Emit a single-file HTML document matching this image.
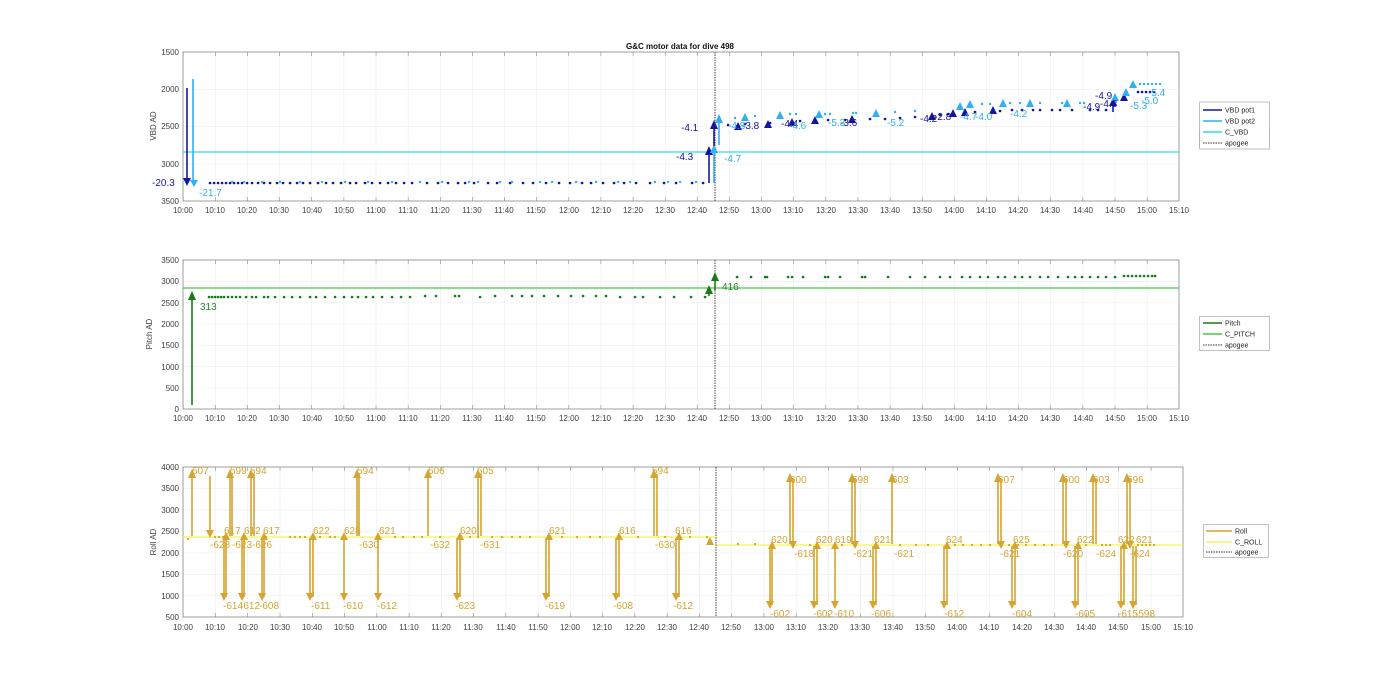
<!DOCTYPE html>
<html><head><meta charset="utf-8"><style>
html,body{margin:0;padding:0;background:#fff}
svg{display:block;font-family:"Liberation Sans",sans-serif}
.t{font-size:8px;fill:#404040}
.lg{font-size:7px;fill:#262626}
</style></head><body>
<svg width="1400" height="693" viewBox="0 0 1400 693" xmlns="http://www.w3.org/2000/svg">
<defs>
<pattern id="g1" x="183" y="52" width="32.13" height="37.25" patternUnits="userSpaceOnUse"><path d="M0 0V37.25M0 0H32.13" stroke="#e4e4e4" stroke-width="0.8" fill="none"/></pattern>
<pattern id="g2" x="183" y="260" width="32.13" height="21.29" patternUnits="userSpaceOnUse"><path d="M0 0V21.29M0 0H32.13" stroke="#e4e4e4" stroke-width="0.8" fill="none"/></pattern>
<pattern id="g3" x="183" y="467" width="32.26" height="21.43" patternUnits="userSpaceOnUse"><path d="M0 0V21.43M0 0H32.26" stroke="#e4e4e4" stroke-width="0.8" fill="none"/></pattern>
<pattern id="tk1" x="183" y="0" width="32.13" height="10" patternUnits="userSpaceOnUse"><path d="M0 0V10" stroke="#555" stroke-width="0.8"/></pattern>
<pattern id="tk3" x="183" y="0" width="32.26" height="10" patternUnits="userSpaceOnUse"><path d="M0 0V10" stroke="#555" stroke-width="0.8"/></pattern>
</defs>
<text x="680" y="49" text-anchor="middle" style="font-size:8px;font-weight:bold;fill:#111">G&amp;C motor data for dive 498</text>

<!-- TOP AXES -->
<rect x="183" y="52" width="996" height="149" fill="url(#g1)"/>
<rect x="183" y="52" width="996" height="4" fill="url(#tk1)"/><rect x="183" y="197" width="996" height="4" fill="url(#tk1)"/>
<rect x="183" y="52" width="996" height="149" fill="none" stroke="#888" stroke-width="0.8"/>
<g class="t" text-anchor="end"><text x="179" y="55">1500</text><text x="179" y="92">2000</text><text x="179" y="129">2500</text><text x="179" y="167">3000</text><text x="179" y="204">3500</text></g>
<text class="t" transform="translate(156,126) rotate(-90)" text-anchor="middle">VBD AD</text>
<line x1="183" y1="152" x2="1179" y2="152" stroke="#33dddd" stroke-width="1.2"/>
<line x1="715" y1="52" x2="715" y2="201" stroke="#333" stroke-width="0.9" stroke-dasharray="1.5,1"/>
<!-- dots navy -->
<path d="M210 183h.1M214 183h.1M218 183h.1M222 183h.1M226 183h.1M230 183h.1M234 183h.1M238 183h.1M242 183h.1M247 183h.1M252 183h.1M258 183h.1M264 183h.1M270 183h.1M277 183h.1M283 183h.1M290 183h.1M297 183h.1M303 183h.1M310 183h.1M318 183h.1M326 183h.1M333 183h.1M341 183h.1M350 183h.1M356 183h.1M365 183h.1M372 183h.1M380 183h.1M388 183h.1M396 183h.1M404 183h.1M412 183h.1M427 183h.1M438 183h.1M448 183h.1M458 183h.1M465 183h.1M474 183h.1M488 183h.1M497 183h.1M510 183h.1M523 183h.1M533 183h.1M546 183h.1M559 183h.1M570 183h.1M582 183h.1M591 183h.1M603 183h.1M614 183h.1M624 183h.1M636 183h.1M650 183h.1M664 183h.1M676 183h.1M692 183h.1M703 183h.1" stroke="#1515a0" stroke-width="2.6" stroke-linecap="round"/>
<path d="M232 182h.1M244 182h.1M262 182h.1M280 182h.1M300 182h.1M322 182h.1M345 182h.1M368 182h.1M392 182h.1M420 182h.1M442 182h.1M469 182h.1M478 182h.1M500 182h.1M512 182h.1M540 182h.1M552 182h.1M576 182h.1M596 182h.1M618 182h.1M630 182h.1M655 182h.1M668 182h.1M680 182h.1M696 182h.1" stroke="#30b0f0" stroke-width="2.4" stroke-linecap="round"/>
<path d="M728 125h.1M745 124h.1M770 123h.1M800 121h.1M828 120h.1M845 120h.1M870 119h.1M885 119h.1M900 118h.1M915 117h.1M940 115h.1M948 114h.1M975 112h.1M1000 111h.1M1012 110h.1M1022 110h.1M1033 110h.1M1040 110h.1M1052 110h.1M1060 110h.1M1072 110h.1M1090 110h.1M1098 110h.1M1106 110h.1M1138 92h.1M1142 92h.1M1146 92h.1M1150 92h.1M1154 92h.1" stroke="#1515a0" stroke-width="2.6" stroke-linecap="round"/>
<path d="M735 118h.1M755 116h.1M790 114h.1M796 114h.1M825 114h.1M830 114h.1M853 113h.1M856 113h.1M895 112h.1M915 111h.1M982 104h.1M990 104h.1M1010 103h.1M1020 103h.1M1040 103h.1M1062 103h.1M1080 103h.1M1084 103h.1M1140 84h.1M1144 84h.1M1148 84h.1M1152 84h.1M1156 84h.1M1160 84h.1" stroke="#30b0f0" stroke-width="2.4" stroke-linecap="round"/>
<!-- arrows -->
<g stroke-width="1.6" fill="none"><line x1="187" y1="88" x2="187" y2="181" stroke="#1515a0"/><line x1="193" y1="79" x2="193" y2="181" stroke="#30b0f0"/>
<line x1="709" y1="183" x2="709" y2="150" stroke="#1515a0"/><line x1="714" y1="150" x2="714" y2="124" stroke="#1515a0"/><line x1="714" y1="183" x2="714" y2="150" stroke="#30b0f0"/><line x1="719" y1="145" x2="719" y2="118" stroke="#30b0f0"/><line x1="1113" y1="112" x2="1113" y2="102" stroke="#1515a0"/></g>
<g fill="#1515a0"><polygon points="183,178 191,178 187,186"/><polygon points="705,155 713,155 709,146"/><polygon points="710,129 718,129 714,120"/><polygon points="734,130 742,130 738,122"/><polygon points="764,128 772,128 768,120"/><polygon points="788,126 796,126 792,118"/><polygon points="811,124 819,124 815,116"/><polygon points="848,123 856,123 852,115"/><polygon points="928,120 936,120 932,112"/><polygon points="949,117 957,117 953,109"/><polygon points="961,116 969,116 965,108"/><polygon points="989,114 997,114 993,106"/><polygon points="1109,106 1117,106 1113,98"/><polygon points="1120,101 1128,101 1124,93"/></g>
<g fill="#30b0f0"><polygon points="190,180 198,180 194,187"/><polygon points="710,153 718,153 714,145"/><polygon points="715,123 723,123 719,114"/><polygon points="741,121 749,121 745,113"/><polygon points="776,119 784,119 780,111"/><polygon points="815,118 823,118 819,110"/><polygon points="872,117 880,117 876,109"/><polygon points="956,110 964,110 960,102"/><polygon points="966,108 974,108 970,100"/><polygon points="999,107 1007,107 1003,99"/><polygon points="1026,107 1034,107 1030,99"/><polygon points="1063,107 1071,107 1067,99"/><polygon points="1111,101 1119,101 1115,93"/><polygon points="1122,96 1130,96 1126,88"/><polygon points="1129,88 1137,88 1133,80"/></g>
<g style="font-size:10px" fill="#1515a0"><text x="152" y="186">-20.3</text><text x="676" y="160">-4.3</text><text x="681" y="131">-4.1</text><text x="742" y="129">-3.8</text><text x="781" y="127">-4.4</text><text x="840" y="126">-3.6</text><text x="920" y="122">-4.2</text><text x="934" y="120">-2.8</text><text x="1083" y="110">-4.9</text><text x="1095" y="99">-4.9</text><text x="1100" y="107">-4.3</text></g>
<g style="font-size:10px" fill="#30b0f0"><text x="199" y="196">-21.7</text><text x="724" y="162">-4.7</text><text x="728" y="129">-4.8</text><text x="789" y="129">-4.6</text><text x="828" y="126">-5.3</text><text x="887" y="126">-5.2</text><text x="960" y="120">-4.7</text><text x="975" y="120">-4.0</text><text x="1010" y="117">-4.2</text><text x="1130" y="109">-5.3</text><text x="1141" y="104">-5.0</text><text x="1148" y="96">-5.4</text></g>
<g class="t" text-anchor="middle">
<text x="183" y="213">10:00</text><text x="215" y="213">10:10</text><text x="247" y="213">10:20</text><text x="279" y="213">10:30</text><text x="312" y="213">10:40</text><text x="344" y="213">10:50</text><text x="376" y="213">11:00</text><text x="408" y="213">11:10</text><text x="440" y="213">11:20</text><text x="472" y="213">11:30</text><text x="504" y="213">11:40</text><text x="536" y="213">11:50</text><text x="569" y="213">12:00</text><text x="601" y="213">12:10</text><text x="633" y="213">12:20</text><text x="665" y="213">12:30</text><text x="697" y="213">12:40</text><text x="729" y="213">12:50</text><text x="761" y="213">13:00</text><text x="793" y="213">13:10</text><text x="826" y="213">13:20</text><text x="858" y="213">13:30</text><text x="890" y="213">13:40</text><text x="922" y="213">13:50</text><text x="954" y="213">14:00</text><text x="986" y="213">14:10</text><text x="1018" y="213">14:20</text><text x="1050" y="213">14:30</text><text x="1083" y="213">14:40</text><text x="1115" y="213">14:50</text><text x="1147" y="213">15:00</text><text x="1179" y="213">15:10</text></g>
<rect x="1199" y="132" width="71" height="16" fill="none"/>
<rect x="1199.5" y="131.5" width="70" height="17" fill="#fff" stroke="#999" stroke-width="0.6" transform="translate(0,-2) scale(1,1)"/>
<rect x="1199.5" y="131" width="70" height="17" fill="none" stroke="none"/>
<g>
<rect x="1199.5" y="102" width="70" height="47" fill="#fff" stroke="#999" stroke-width="0.6"/>
<line x1="1203" y1="110" x2="1222" y2="110" stroke="#1515a0" stroke-width="1.6"/><text class="lg" x="1225" y="112.5">VBD pot1</text>
<line x1="1203" y1="121" x2="1222" y2="121" stroke="#30b0f0" stroke-width="1.6"/><text class="lg" x="1225" y="123.5">VBD pot2</text>
<line x1="1203" y1="132" x2="1222" y2="132" stroke="#33dddd" stroke-width="1.6"/><text class="lg" x="1225" y="134.5">C_VBD</text>
<line x1="1203" y1="143" x2="1222" y2="143" stroke="#333" stroke-width="0.9" stroke-dasharray="1.5,1"/><text class="lg" x="1225" y="145.5">apogee</text></g>

<!-- MIDDLE AXES -->
<rect x="183" y="260" width="996" height="149" fill="url(#g2)"/>
<rect x="183" y="260" width="996" height="4" fill="url(#tk1)"/><rect x="183" y="405" width="996" height="4" fill="url(#tk1)"/>
<rect x="183" y="260" width="996" height="149" fill="none" stroke="#888" stroke-width="0.8"/>
<g class="t" text-anchor="end"><text x="179" y="263">3500</text><text x="179" y="284">3000</text><text x="179" y="306">2500</text><text x="179" y="327">2000</text><text x="179" y="348">1500</text><text x="179" y="370">1000</text><text x="179" y="391">500</text><text x="179" y="412">0</text></g>
<text class="t" transform="translate(152,334) rotate(-90)" text-anchor="middle">Pitch AD</text>
<line x1="183" y1="288" x2="1179" y2="288" stroke="#44cc44" stroke-width="1.2"/>
<line x1="715" y1="260" x2="715" y2="409" stroke="#333" stroke-width="0.9" stroke-dasharray="1.5,1"/>
<path d="M209 297h.1M212 297h.1M215 297h.1M218 297h.1M221 297h.1M224 297h.1M228 297h.1M232 297h.1M236 297h.1M240 297h.1M246 297h.1M252 297h.1M256 297h.1M264 297h.1M268 297h.1M275 297h.1M284 297h.1M292 297h.1M300 297h.1M310 297h.1M316 297h.1M325 297h.1M335 297h.1M344 297h.1M352 297h.1M358 297h.1M366 297h.1M373 297h.1M382 297h.1M392 297h.1M401 297h.1M410 297h.1M425 296h.1M436 296h.1M455 296h.1M459 296h.1M480 297h.1M495 296h.1M512 296h.1M522 296h.1M532 296h.1M544 296h.1M558 296h.1M571 296h.1M583 296h.1M596 296h.1M606 296h.1M620 297h.1M635 297h.1M643 297h.1M660 297h.1M674 297h.1M691 297h.1M705 297h.1M737 277h.1M751 277h.1M765 277h.1M767 277h.1M788 277h.1M792 277h.1M803 277h.1M825 277h.1M828 277h.1M840 277h.1M862 277h.1M865 277h.1M888 277h.1M910 277h.1M925 277h.1M940 277h.1M950 277h.1M962 277h.1M970 277h.1M980 277h.1M988 277h.1M998 277h.1M1005 277h.1M1015 277h.1M1022 277h.1M1030 277h.1M1040 277h.1M1048 277h.1M1058 277h.1M1068 277h.1M1075 277h.1M1082 277h.1M1090 277h.1M1098 277h.1M1106 277h.1M1115 277h.1M1124 276h.1M1128 276h.1M1132 276h.1M1136 276h.1M1140 276h.1M1144 276h.1M1148 276h.1M1152 276h.1M1155 276h.1" stroke="#1a7a1a" stroke-width="2.6" stroke-linecap="round"/>
<g stroke="#1a7a1a" stroke-width="1.6"><line x1="192" y1="405" x2="192" y2="298"/><line x1="709" y1="296" x2="709" y2="289"/><line x1="715" y1="290" x2="715" y2="278"/></g>
<g fill="#1a7a1a"><polygon points="188,300 196,300 192,291"/><polygon points="705,294 713,294 709,285"/><polygon points="711,281 719,281 715,272"/></g>
<g style="font-size:10px" fill="#2a8a2a"><text x="200" y="310">313</text><text x="722" y="290">416</text></g>
<g class="t" text-anchor="middle">
<text x="183" y="421">10:00</text><text x="215" y="421">10:10</text><text x="247" y="421">10:20</text><text x="279" y="421">10:30</text><text x="312" y="421">10:40</text><text x="344" y="421">10:50</text><text x="376" y="421">11:00</text><text x="408" y="421">11:10</text><text x="440" y="421">11:20</text><text x="472" y="421">11:30</text><text x="504" y="421">11:40</text><text x="536" y="421">11:50</text><text x="569" y="421">12:00</text><text x="601" y="421">12:10</text><text x="633" y="421">12:20</text><text x="665" y="421">12:30</text><text x="697" y="421">12:40</text><text x="729" y="421">12:50</text><text x="761" y="421">13:00</text><text x="793" y="421">13:10</text><text x="826" y="421">13:20</text><text x="858" y="421">13:30</text><text x="890" y="421">13:40</text><text x="922" y="421">13:50</text><text x="954" y="421">14:00</text><text x="986" y="421">14:10</text><text x="1018" y="421">14:20</text><text x="1050" y="421">14:30</text><text x="1083" y="421">14:40</text><text x="1115" y="421">14:50</text><text x="1147" y="421">15:00</text><text x="1179" y="421">15:10</text></g>
<rect x="1199.5" y="316.5" width="70" height="34" fill="#fff" stroke="#999" stroke-width="0.6"/>
<line x1="1203" y1="323" x2="1222" y2="323" stroke="#1a7a1a" stroke-width="1.6"/><text class="lg" x="1225" y="325.5">Pitch</text>
<line x1="1203" y1="334" x2="1222" y2="334" stroke="#44cc44" stroke-width="1.6"/><text class="lg" x="1225" y="336.5">C_PITCH</text>
<line x1="1203" y1="345" x2="1222" y2="345" stroke="#333" stroke-width="0.9" stroke-dasharray="1.5,1"/><text class="lg" x="1225" y="347.5">apogee</text>

<!-- BOTTOM AXES -->
<rect x="183" y="467" width="1000" height="150" fill="url(#g3)"/>
<rect x="183" y="467" width="1000" height="4" fill="url(#tk3)"/><rect x="183" y="613" width="1000" height="4" fill="url(#tk3)"/>
<rect x="183" y="467" width="1000" height="150" fill="none" stroke="#888" stroke-width="0.8"/>
<g class="t" text-anchor="end"><text x="179" y="470">4000</text><text x="179" y="491">3500</text><text x="179" y="513">3000</text><text x="179" y="534">2500</text><text x="179" y="556">2000</text><text x="179" y="577">1500</text><text x="179" y="599">1000</text><text x="179" y="620">500</text></g>
<text class="t" transform="translate(156,542) rotate(-90)" text-anchor="middle">Roll AD</text>
<line x1="183" y1="537" x2="715" y2="537" stroke="#f5f060" stroke-width="1.3"/>
<line x1="715" y1="545" x2="1183" y2="545" stroke="#f5f060" stroke-width="1.3"/>
<line x1="716" y1="467" x2="716" y2="617" stroke="#333" stroke-width="0.9" stroke-dasharray="1.5,1"/>
<path d="M188 539h.1M215 537h.1M219 537h.1M223 537h.1M226 537h.1M266 537h.1M290 537h.1M295 537h.1M300 537h.1M305 537h.1M320 537h.1M330 537h.1M335 537h.1M395 537h.1M403 537h.1M414 537h.1M422 537h.1M440 537h.1M470 537h.1M478 537h.1M492 537h.1M502 537h.1M512 537h.1M520 537h.1M530 537h.1M562 537h.1M577 537h.1M590 537h.1M600 537h.1M638 537h.1M665 537h.1M690 537h.1M707 537h.1M738 544h.1M755 544h.1M793 545h.1M810 545h.1M842 545h.1M856 545h.1M900 545h.1M916 545h.1M928 545h.1M955 545h.1M963 545h.1M972 545h.1M981 545h.1M990 545h.1M1009 545h.1M1018 545h.1M1026 545h.1M1035 545h.1M1044 545h.1M1052 545h.1M1078 545h.1M1086 545h.1M1102 545h.1M1106 545h.1M1110 545h.1M1138 545h.1M1142 545h.1M1146 545h.1M1150 545h.1M1154 545h.1" stroke="#d4a530" stroke-width="2.2" stroke-linecap="round"/>
<g stroke="#d4a530" stroke-width="1.6" fill="none">
<path d="M192 536V474M210 476V533M230 536V474M232 474V536M251 536V474M254 474V536M357 536V474M359 474V536M428 536V474M478 536V474M481 474V536M654 536V474M657 474V536"/>
<path d="M224 538V597M226 597V538M242 538V597M244 597V538M262 538V597M264 597V538M310 538V597M313 597V538M344 538V597M378 538V597M457 538V597M460 597V538M546 538V597M549 597V538M616 538V597M619 597V538M676 538V597M679 597V538"/>
<path d="M790 544V478M793 478V544M852 544V478M855 478V544M892 544V478M998 544V478M1001 478V544M1063 544V478M1066 478V544M1093 544V478M1096 478V544M1127 544V478M1130 478V544"/>
<path d="M770 546V605M772 605V546M814 546V605M817 605V546M835 546V605M873 546V605M876 605V546M944 546V605M947 605V546M1012 546V605M1015 605V546M1075 546V605M1078 605V546M1121 546V605M1124 605V546M1133 546V605M1136 605V546"/></g>
<g fill="#d4a530">
<polygon points="188,478 196,478 192,469"/><polygon points="206,530 214,530 210,538"/><polygon points="226,478 234,478 230,469"/><polygon points="247,478 255,478 251,469"/><polygon points="353,478 361,478 357,469"/><polygon points="424,478 432,478 428,469"/><polygon points="474,478 482,478 478,469"/><polygon points="650,478 658,478 654,469"/>
<polygon points="220,593 228,593 224,601"/><polygon points="238,593 246,593 242,601"/><polygon points="258,593 266,593 262,601"/><polygon points="306,593 314,593 310,601"/><polygon points="340,593 348,593 344,601"/><polygon points="374,593 382,593 378,601"/><polygon points="453,593 461,593 457,601"/><polygon points="542,593 550,593 546,601"/><polygon points="612,593 620,593 616,601"/><polygon points="672,593 680,593 676,601"/>
<polygon points="222,540 230,540 226,532"/><polygon points="240,540 248,540 244,532"/><polygon points="260,540 268,540 264,532"/><polygon points="309,540 317,540 313,532"/><polygon points="340,540 348,540 344,532"/><polygon points="374,540 382,540 378,532"/><polygon points="456,540 464,540 460,532"/><polygon points="545,540 553,540 549,532"/><polygon points="615,540 623,540 619,532"/><polygon points="675,540 683,540 679,532"/><polygon points="706,545 714,545 710,537"/>
<polygon points="786,482 794,482 790,473"/><polygon points="848,482 856,482 852,473"/><polygon points="888,482 896,482 892,473"/><polygon points="994,482 1002,482 998,473"/><polygon points="1059,482 1067,482 1063,473"/><polygon points="1089,482 1097,482 1093,473"/><polygon points="1123,482 1131,482 1127,473"/>
<polygon points="766,601 774,601 770,609"/><polygon points="810,601 818,601 814,609"/><polygon points="831,601 839,601 835,609"/><polygon points="869,601 877,601 873,609"/><polygon points="940,601 948,601 944,609"/><polygon points="1008,601 1016,601 1012,609"/><polygon points="1071,601 1079,601 1075,609"/><polygon points="1117,601 1125,601 1121,609"/><polygon points="1129,601 1137,601 1133,609"/>
<polygon points="768,549 776,549 772,541"/><polygon points="789,541 797,541 793,549"/><polygon points="813,549 821,549 817,541"/><polygon points="831,549 839,549 835,541"/><polygon points="851,541 859,541 855,549"/><polygon points="872,549 880,549 876,541"/><polygon points="943,549 951,549 947,541"/><polygon points="997,541 1005,541 1001,549"/><polygon points="1011,549 1019,549 1015,541"/><polygon points="1062,541 1070,541 1066,549"/><polygon points="1074,549 1082,549 1078,541"/><polygon points="1120,549 1128,549 1124,541"/><polygon points="1126,541 1134,541 1130,549"/>
</g>
<g style="font-size:10px" fill="#d4a530">
<text x="192" y="474">607</text><text x="230" y="474">599</text><text x="250" y="474">594</text><text x="357" y="474">594</text><text x="428" y="474">606</text><text x="477" y="474">605</text><text x="652" y="474">594</text>
<text x="210" y="548">-628</text><text x="224" y="534">617</text><text x="232" y="548">-623</text><text x="244" y="534">612</text><text x="252" y="548">-626</text><text x="263" y="534">617</text><text x="313" y="534">622</text><text x="344" y="534">628</text><text x="359" y="548">-630</text><text x="379" y="534">621</text><text x="430" y="548">-632</text><text x="460" y="534">620</text><text x="480" y="548">-631</text><text x="549" y="534">621</text><text x="619" y="534">616</text><text x="655" y="548">-630</text><text x="675" y="534">616</text>
<text x="223" y="609">-614</text><text x="240" y="609">-612</text><text x="259" y="609">-608</text><text x="311" y="609">-611</text><text x="343" y="609">-610</text><text x="377" y="609">-612</text><text x="455" y="609">-623</text><text x="545" y="609">-619</text><text x="613" y="609">-608</text><text x="673" y="609">-612</text>
<text x="790" y="483">600</text><text x="852" y="483">598</text><text x="892" y="483">603</text><text x="998" y="483">607</text><text x="1063" y="483">600</text><text x="1093" y="483">603</text><text x="1127" y="483">596</text>
<text x="771" y="543">620</text><text x="794" y="557">-618</text><text x="816" y="543">620</text><text x="835" y="543">619</text><text x="853" y="557">-621</text><text x="874" y="543">621</text><text x="894" y="557">-621</text><text x="946" y="543">624</text><text x="1000" y="557">-621</text><text x="1013" y="543">625</text><text x="1063" y="557">-620</text><text x="1077" y="543">622</text><text x="1096" y="557">-624</text><text x="1118" y="543">622</text><text x="1136" y="543">621</text><text x="1130" y="557">-624</text>
<text x="770" y="617">-602</text><text x="813" y="617">-602</text><text x="834" y="617">-610</text><text x="871" y="617">-606</text><text x="944" y="617">-612</text><text x="1012" y="617">-604</text><text x="1075" y="617">-605</text><text x="1118" y="617">-615</text><text x="1135" y="617">-598</text></g>
<g class="t" text-anchor="middle">
<text x="183" y="630">10:00</text><text x="215" y="630">10:10</text><text x="248" y="630">10:20</text><text x="280" y="630">10:30</text><text x="312" y="630">10:40</text><text x="344" y="630">10:50</text><text x="377" y="630">11:00</text><text x="409" y="630">11:10</text><text x="441" y="630">11:20</text><text x="473" y="630">11:30</text><text x="506" y="630">11:40</text><text x="538" y="630">11:50</text><text x="570" y="630">12:00</text><text x="602" y="630">12:10</text><text x="635" y="630">12:20</text><text x="667" y="630">12:30</text><text x="699" y="630">12:40</text><text x="731" y="630">12:50</text><text x="764" y="630">13:00</text><text x="796" y="630">13:10</text><text x="828" y="630">13:20</text><text x="860" y="630">13:30</text><text x="893" y="630">13:40</text><text x="925" y="630">13:50</text><text x="957" y="630">14:00</text><text x="989" y="630">14:10</text><text x="1022" y="630">14:20</text><text x="1054" y="630">14:30</text><text x="1086" y="630">14:40</text><text x="1118" y="630">14:50</text><text x="1151" y="630">15:00</text><text x="1183" y="630">15:10</text></g>
<rect x="1203.5" y="524.5" width="65" height="33" fill="#fff" stroke="#999" stroke-width="0.6"/>
<line x1="1206" y1="531" x2="1232" y2="531" stroke="#d4a530" stroke-width="1.6"/><text class="lg" x="1235" y="533.5">Roll</text>
<line x1="1206" y1="542" x2="1232" y2="542" stroke="#f5f060" stroke-width="1.6"/><text class="lg" x="1235" y="544.5">C_ROLL</text>
<line x1="1206" y1="552" x2="1232" y2="552" stroke="#333" stroke-width="0.9" stroke-dasharray="1.5,1"/><text class="lg" x="1235" y="554.5">apogee</text>
</svg>
</body></html>
